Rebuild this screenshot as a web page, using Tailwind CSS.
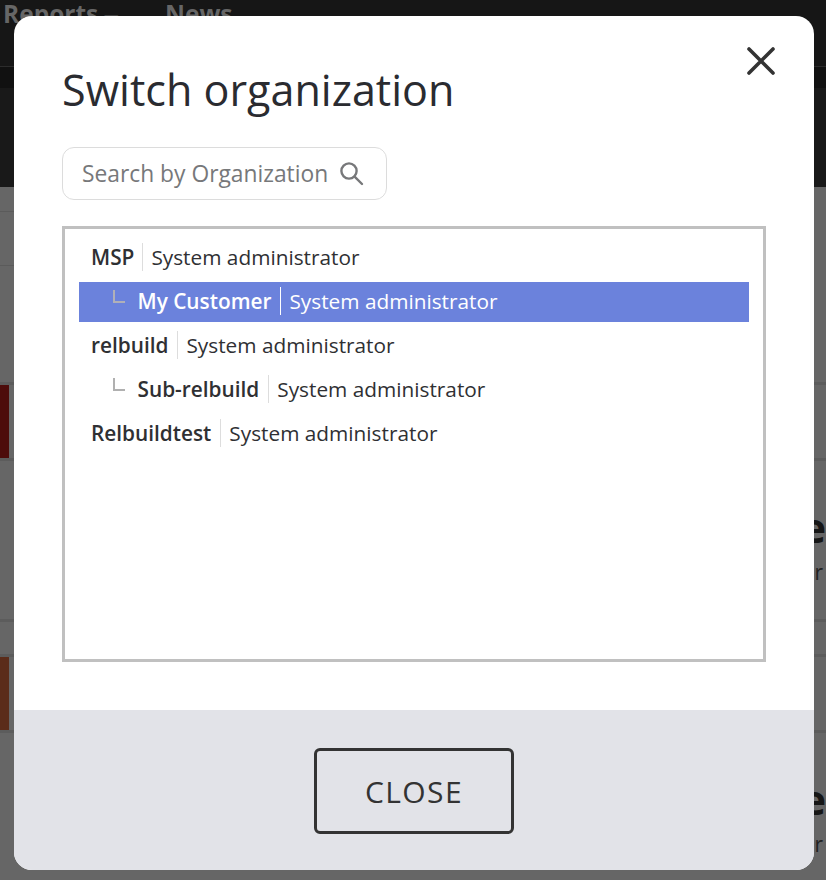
<!DOCTYPE html>
<html lang="en">
<head>
  <meta charset="UTF-8">
  <title>Switch organization</title>
  <script src="https://cdn.jsdelivr.net/npm/@tailwindcss/browser@4"></script>
</head>
<body class="h-[880px] w-[826px] overflow-hidden bg-[#666666] font-['Open_Sans',sans-serif] text-[#2f3033]">

  <!-- page behind the modal -->
  <div class="h-[880px] overflow-hidden">
    <div class="flex h-[67px] items-start border-b border-[#2c2c2c] bg-[#161616] pl-[3px] text-[24.5px] leading-[28px] font-bold text-[#666666]">
      <span class="w-[162px]">Reports ‒</span>
      <span>News</span>
    </div>
    <div class="h-[21px] bg-[#111111]"></div>
    <div class="h-[99px] bg-[#191919]"></div>
    <div class="h-[25px] w-[14px] border-b border-[#5b5b5b]"></div>
    <div class="h-[54px] w-[14px] border-b border-[#5b5b5b]"></div>
    <div class="h-[116px]"></div>
    <div class="h-[79px] border-y-[3px] border-[#5c5c5c]">
      <div class="h-full w-[9px] bg-[#4d0c0b]"></div>
    </div>
    <div class="flex h-[158px] flex-col items-end overflow-hidden">
      <div class="-mr-[21px] mt-[41px] text-[42px] leading-[50px] font-bold text-[#161616]">es</div>
      <div class="mt-[5px] mr-[3px] text-[21px] leading-[30px] text-[#222222]">or</div>
    </div>
    <div class="h-[3px] bg-[#5c5c5c]"></div>
    <div class="h-[32px]"></div>
    <div class="h-[79px] border-y-[3px] border-[#5c5c5c]">
      <div class="h-full w-[9px] bg-[#5b2c1a]"></div>
    </div>
    <div class="flex h-[147px] flex-col items-end overflow-hidden">
      <div class="-mr-[21px] mt-[41px] text-[42px] leading-[50px] font-bold text-[#161616]">es</div>
      <div class="mt-[5px] mr-[3px] text-[21px] leading-[30px] text-[#222222]">or</div>
    </div>
  </div>

  <!-- modal -->
  <div class="absolute top-[16px] left-[14px] flex h-[854px] w-[800px] flex-col overflow-hidden rounded-[18px] bg-white">
    <div class="relative h-[694px] px-[48px] pt-[46px]">
      <h2 class="text-[43.1px] leading-[56px] font-normal text-[#2a2b30]">Switch organization</h2>
      <button class="absolute top-[31px] right-[39px] text-[#333333]">
        <svg width="28" height="28" viewBox="0 0 28 28" fill="none" stroke="currentColor" stroke-width="3.6" stroke-linecap="round"><path d="M2 2 L26 26 M26 2 L2 26"/></svg>
      </button>

      <div class="mt-[29px] flex h-[53px] w-[325px] items-center rounded-[12px] border border-[#dcdcdc] pr-[22px] pl-[19px]">
        <span class="flex-1 pt-[2px] text-[22.8px] leading-none text-[#77787a]">Search by Organization</span>
        <svg width="25" height="25" viewBox="0 0 25 25" fill="none" stroke="#77787a" stroke-width="2.4" stroke-linecap="round"><circle cx="10" cy="10" r="7.6"/><path d="M15.6 15.6 L23 23"/></svg>
      </div>

      <div class="mt-[26px] h-[436px] w-[704px] border-[3px] border-[#c0c0c0] px-[14px] pt-[9px] text-[20.8px] leading-[28px]">
        <div class="flex h-[44px] items-center pb-[6px] pl-[12px]">
          <b class="pr-[8px] font-semibold">MSP</b>
          <span class="border-l border-[#dddddd] pl-[8px]">System administrator</span>
        </div>
        <div class="flex h-[40px] items-center bg-[#6b82dc] pb-[2px] pl-[12px] text-white">
          <span class="mb-[10px] ml-[22px] h-[13px] w-[12px] border-b-2 border-l-2 border-[#b0b0b8]"></span>
          <b class="ml-[12.5px] pr-[9px] font-semibold">My Customer</b>
          <span class="border-l border-white pl-[8px]">System administrator</span>
        </div>
        <div class="flex h-[48px] items-center pb-[2px] pl-[12px]">
          <b class="pr-[9px] font-semibold">relbuild</b>
          <span class="border-l border-[#dddddd] pl-[8px]">System administrator</span>
        </div>
        <div class="flex h-[40px] items-center pb-[2px] pl-[12px]">
          <span class="mb-[10px] ml-[22px] h-[13px] w-[12px] border-b-2 border-l-2 border-[#b0b0b0]"></span>
          <b class="ml-[12.5px] pr-[9px] font-semibold">Sub-relbuild</b>
          <span class="border-l border-[#dddddd] pl-[8px]">System administrator</span>
        </div>
        <div class="flex h-[48px] items-center pb-[2px] pl-[12px]">
          <b class="pr-[9px] font-semibold">Relbuildtest</b>
          <span class="border-l border-[#dddddd] pl-[8px]">System administrator</span>
        </div>
      </div>
    </div>

    <div class="flex h-[160px] items-start justify-center bg-[#e2e3e8] pt-[38px]">
      <button class="h-[86px] w-[200px] rounded-[6px] border-[3px] border-[#333333] text-[30px] tracking-[1.4px] text-[#333333]">CLOSE</button>
    </div>
  </div>
</body>
</html>
